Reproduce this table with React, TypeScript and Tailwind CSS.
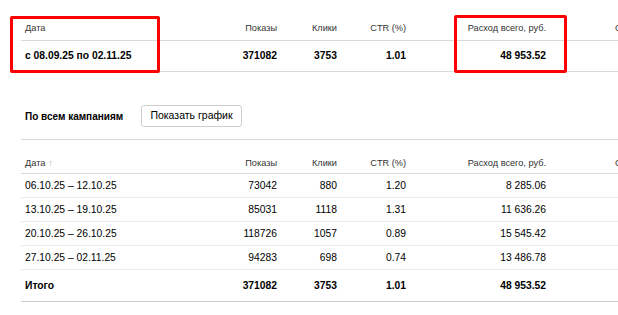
import React from "react";

type Row = {
  date: string;
  shows: string;
  clicks: string;
  ctr: string;
  cost: string;
};

const weeks: Row[] = [
  { date: "06.10.25 – 12.10.25", shows: "73042", clicks: "880", ctr: "1.20", cost: "8 285.06" },
  { date: "13.10.25 – 19.10.25", shows: "85031", clicks: "1118", ctr: "1.31", cost: "11 636.26" },
  { date: "20.10.25 – 26.10.25", shows: "118726", clicks: "1057", ctr: "0.89", cost: "15 545.42" },
  { date: "27.10.25 – 02.11.25", shows: "94283", clicks: "698", ctr: "0.74", cost: "13 486.78" },
];

const cols = "grid grid-cols-[179px_81px_60px_69px_201px_200px]";

function HeaderCells({ sortable }: { sortable?: boolean }) {
  return (
    <>
      <div className="pl-1">
        Дата
        {sortable && <span className="ml-[3px] text-[#b5b5b5]">↑</span>}
      </div>
      <div className="pr-1 text-right">Показы</div>
      <div className="pr-1 text-right">Клики</div>
      <div className="pr-1 text-right">CTR (%)</div>
      <div className="pr-[65px] text-right">Расход всего, руб.</div>
      <div className="pl-1 whitespace-nowrap">Средняя цена клика, руб.</div>
    </>
  );
}

function DataCells({ row }: { row: Row }) {
  return (
    <>
      <div className="pl-1 whitespace-nowrap">{row.date}</div>
      <div className="pr-1 text-right">{row.shows}</div>
      <div className="pr-1 text-right">{row.clicks}</div>
      <div className="pr-1 text-right">{row.ctr}</div>
      <div className="pr-[65px] text-right">{row.cost}</div>
      <div />
    </>
  );
}

export default function App() {
  const total: Row = {
    date: "Итого",
    shows: "371082",
    clicks: "3753",
    ctr: "1.01",
    cost: "48 953.52",
  };

  return (
    <div className="relative w-[618px] h-[315px] overflow-hidden bg-white text-black font-['Liberation_Sans',Arial,sans-serif]">
      <div className="w-[900px] pl-[21px] pt-[18px]">
        {/* Summary table */}
        <div className={`${cols} h-[23px] items-center border-b border-[#d9d9d9] text-[9.2px] text-[#333]`}>
          <HeaderCells />
        </div>
        <div className={`${cols} h-[31px] items-center border-b border-[#d9d9d9] text-[10.3px] font-bold`}>
          <DataCells row={{ ...total, date: "с 08.09.25 по 02.11.25" }} />
        </div>

        {/* Campaigns */}
        <div className="mt-[33px] flex h-[22px] items-center">
          <div className="w-[120px] pl-1 text-[10px] font-bold">По всем кампаниям</div>
          <button className="h-[22px] w-[101px] rounded-[3px] border border-[#cfcfcf] bg-white text-[10.5px] text-black">
            Показать график
          </button>
        </div>

        <div className="mt-[12px] border-t border-[#d9d9d9]">
          <div className={`${cols} h-[34px] items-end border-b border-[#d9d9d9] pb-[4px] text-[9.2px] leading-[12px] text-[#333]`}>
            <HeaderCells sortable />
          </div>
          {weeks.map((w) => (
            <div key={w.date} className={`${cols} h-[24px] items-center border-b border-[#ececec] text-[10.3px]`}>
              <DataCells row={w} />
            </div>
          ))}
          <div className={`${cols} h-[32px] items-center border-b border-[#cccccc] text-[10.3px] font-bold`}>
            <DataCells row={total} />
          </div>
        </div>
      </div>

      {/* annotation frames */}
      <div className="absolute left-[10px] top-[16px] h-[57px] w-[150px] rounded-[2px] border-[3px] border-[#ff0000]" />
      <div className="absolute left-[454px] top-[15px] h-[58px] w-[113px] rounded-[2px] border-[3px] border-[#ff0000]" />
    </div>
  );
}
